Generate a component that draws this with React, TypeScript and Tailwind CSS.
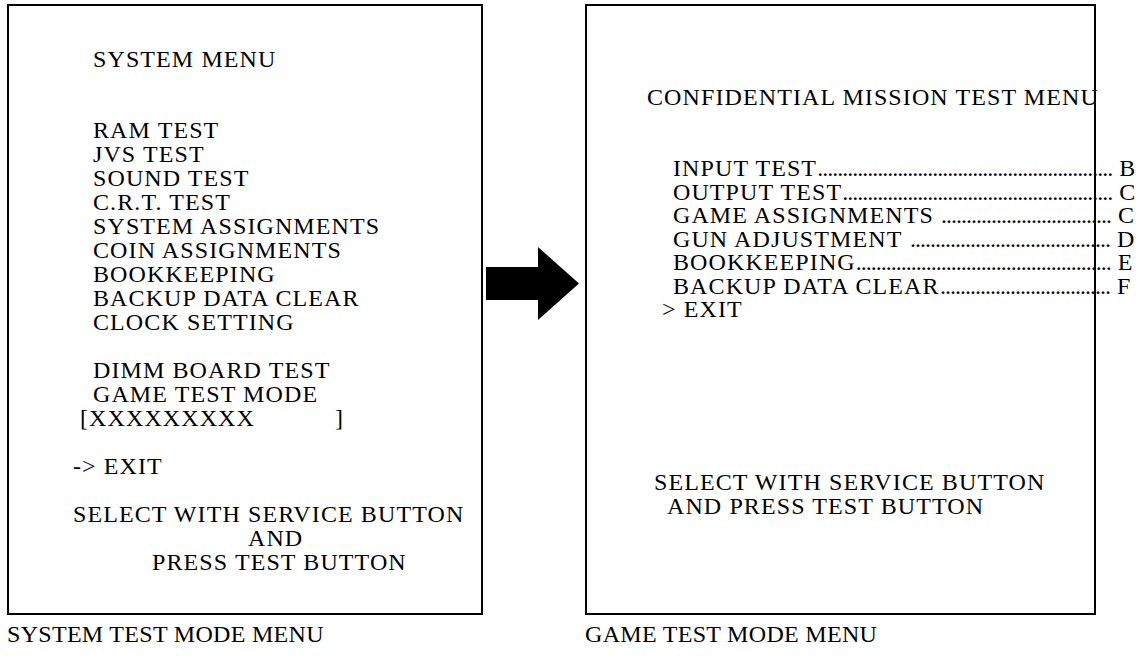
const systemItems = [
  'RAM TEST',
  'JVS TEST',
  'SOUND TEST',
  'C.R.T. TEST',
  'SYSTEM ASSIGNMENTS',
  'COIN ASSIGNMENTS',
  'BOOKKEEPING',
  'BACKUP DATA CLEAR',
  'CLOCK SETTING',
];

// dot counts picked so every leader ends just before the key letter
const gameItems = [
  { label: 'INPUT TEST', dots: 59, key: 'B' },
  { label: 'OUTPUT TEST', dots: 54, key: 'C' },
  { label: 'GAME ASSIGNMENTS ', dots: 34, key: 'C' },
  { label: 'GUN ADJUSTMENT ', dots: 40, key: 'D' },
  { label: 'BOOKKEEPING', dots: 51, key: 'E' },
  { label: 'BACKUP DATA CLEAR', dots: 34, key: 'F' },
];

const Arrow = () => (
  <svg width="94" height="74" viewBox="0 0 94 74">
    <path d="M0 20 H52 V0 L93 36.5 L52 73 V53 H0 Z" fill="#000" />
  </svg>
);

const SystemMenu = () => (
  <div className="flex flex-col">
    <div className="w-[476px] h-[611px] border-2 border-black pt-[41px]">
      <div className="pl-[84px] leading-[24px]">SYSTEM MENU</div>

      <div className="mt-[47px] pl-[84px] leading-[24px]">
        {systemItems.map((item) => (
          <div key={item}>{item}</div>
        ))}
      </div>

      <div className="mt-[24px] leading-[24px]">
        <div className="pl-[84px]">DIMM BOARD TEST</div>
        <div className="pl-[84px]">GAME TEST MODE</div>
        <div className="pl-[71px] flex">
          <span>[XXXXXXXXX</span>
          <span className="ml-[80px]">]</span>
        </div>
      </div>

      <div className="mt-[24px] pl-[64px] leading-[24px]">-&gt; EXIT</div>

      <div className="mt-[24px] leading-[24px]">
        <div className="pl-[64px]">SELECT WITH SERVICE BUTTON</div>
        <div className="pl-[239px]">AND</div>
        <div className="pl-[143px]">PRESS TEST BUTTON</div>
      </div>
    </div>
    <div className="mt-[7px] leading-[24px] tracking-[0.3px]">SYSTEM TEST MODE MENU</div>
  </div>
);

const GameMenu = () => (
  <div className="flex flex-col">
    <div className="w-[511px] h-[611px] border-2 border-black pt-[79px] whitespace-nowrap">
      <div className="pl-[60px] leading-[24px]">CONFIDENTIAL MISSION TEST MENU</div>

      <div className="mt-[48px] leading-[23.5px]">
        {gameItems.map((item) => (
          <div key={item.label} className="ml-[86px] w-[462px] flex">
            <span className="shrink-0 whitespace-pre">{item.label}</span>
            <span className="flex-1 flex justify-end tracking-[-1px]">{'.'.repeat(item.dots)}</span>
            <span className="shrink-0 w-[18px] ml-[7px]">{item.key}</span>
          </div>
        ))}
        <div className="pl-[75px]">&gt; EXIT</div>
      </div>

      <div className="mt-[148px] leading-[24px]">
        <div className="pl-[67px]">SELECT WITH SERVICE BUTTON</div>
        <div className="pl-[80px]">AND PRESS TEST BUTTON</div>
      </div>
    </div>
    <div className="mt-[7px] leading-[24px] tracking-[0.3px]">GAME TEST MODE MENU</div>
  </div>
);

const App = () => {
  return (
    <div className="w-[1146px] h-[657px] overflow-hidden bg-white text-black font-['Liberation_Serif',serif] text-[24px] tracking-[1.1px]">
      <div className="flex pl-[7px] pt-[4px]">
        <SystemMenu />
        <div className="w-[102px] shrink-0 pt-[243px] pl-[3px]">
          <Arrow />
        </div>
        <GameMenu />
      </div>
    </div>
  );
};

export default App;
